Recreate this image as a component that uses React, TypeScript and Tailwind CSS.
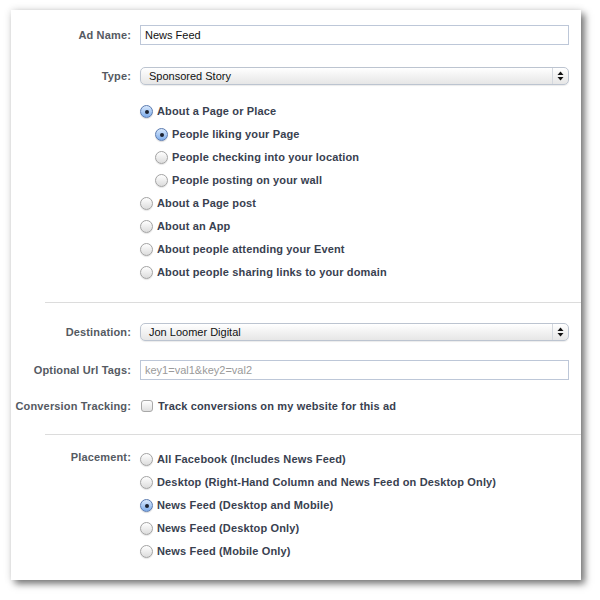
import React from "react";

const font = { fontFamily: '"Liberation Sans", Arial, sans-serif' };

function Radio({ checked }: { checked?: boolean }) {
  if (checked) {
    return (
      <span className="relative flex h-[13px] w-[13px] shrink-0 items-center justify-center rounded-full border border-[#5b7bb0] bg-gradient-to-b from-[#d8e8fc] to-[#7fadea] shadow-[0_1px_1px_rgba(0,0,0,0.15)]">
        <span className="h-[4px] w-[4px] rounded-full bg-[#1c2230]" />
      </span>
    );
  }
  return (
    <span className="h-[13px] w-[13px] shrink-0 rounded-full border border-[#a3a3a3] bg-gradient-to-b from-[#ffffff] to-[#dcdcdc] shadow-[0_1px_1px_rgba(0,0,0,0.1)]" />
  );
}

function RadioRow({ label, checked, indent }: { label: string; checked?: boolean; indent?: boolean }) {
  return (
    <div className={`flex h-[23px] items-center ${indent ? "pl-[15px]" : ""}`}>
      <Radio checked={checked} />
      <span className="ml-[4px] text-[11px] font-bold tracking-[0.15px] text-[#394150]">{label}</span>
    </div>
  );
}

function Arrows() {
  return (
    <span className="flex h-full w-[16px] items-center justify-center border-l border-[#d4d8de]">
      <svg width="7" height="10" viewBox="0 0 7 10">
        <path d="M3.5 0.5 L6.5 4 L0.5 4 Z" fill="#111" />
        <path d="M0.5 6 L6.5 6 L3.5 9.5 Z" fill="#111" />
      </svg>
    </span>
  );
}

function Select({ value }: { value: string }) {
  return (
    <div className="flex h-[18px] items-center rounded-[5px] border border-[#bcc4d0] bg-gradient-to-b from-[#ffffff] to-[#e6e6e6] pl-[8px] shadow-[0_1px_1px_rgba(0,0,0,0.08)]">
      <span className="flex-1 text-[11px] leading-none text-[#111]">{value}</span>
      <Arrows />
    </div>
  );
}

function Label({ children, className = "" }: { children: React.ReactNode; className?: string }) {
  return <div className={`text-right text-[11px] font-bold tracking-[0.15px] text-[#555a62] ${className}`}>{children}</div>;
}

export default function App() {
  return (
    <div className="min-h-[600px] w-[600px] bg-white pt-[10px] pl-[11px]" style={font}>
      <div className="h-[570px] w-[570px] bg-white pt-[15px] pr-[12px] shadow-[4px_4px_7px_rgba(0,0,0,0.5),0_0_8px_rgba(0,0,0,0.12)]">
        <div className="grid grid-cols-[120px_1fr] items-center gap-x-[9px]">
          <Label>Ad Name:</Label>
          <div className="flex h-[20px] items-center border border-[#bdc7d8] px-[4px] text-[11px] text-[#111]">News Feed</div>
        </div>

        <div className="mt-[22px] grid grid-cols-[120px_1fr] items-center gap-x-[9px]">
          <Label>Type:</Label>
          <Select value="Sponsored Story" />
        </div>

        <div className="mt-[15px] grid grid-cols-[120px_1fr] gap-x-[9px]">
          <div />
          <div className="flex flex-col">
            <RadioRow label="About a Page or Place" checked />
            <RadioRow label="People liking your Page" checked indent />
            <RadioRow label="People checking into your location" indent />
            <RadioRow label="People posting on your wall" indent />
            <RadioRow label="About a Page post" />
            <RadioRow label="About an App" />
            <RadioRow label="About people attending your Event" />
            <RadioRow label="About people sharing links to your domain" />
          </div>
        </div>

        <div className="-mr-[12px] mt-[18px] ml-[34px] h-px bg-[#dcdcdc]" />

        <div className="mt-[20px] grid grid-cols-[120px_1fr] items-center gap-x-[9px]">
          <Label>Destination:</Label>
          <Select value="Jon Loomer Digital" />
        </div>

        <div className="mt-[19px] grid grid-cols-[120px_1fr] items-center gap-x-[9px]">
          <Label>Optional Url Tags:</Label>
          <div className="flex h-[20px] items-center border border-[#bdc7d8] px-[4px] text-[11px] text-[#9a9a9a]">key1=val1&amp;key2=val2</div>
        </div>

        <div className="mt-[16px] grid h-[20px] grid-cols-[120px_1fr] items-center gap-x-[9px]">
          <Label>Conversion Tracking:</Label>
          <div className="flex items-center">
            <span className="ml-px h-[12px] w-[12px] rounded-[3px] border border-[#a8a8a8] bg-gradient-to-b from-[#ffffff] to-[#e0e0e0]" />
            <span className="ml-[5px] text-[11px] font-bold tracking-[0.15px] text-[#394150]">Track conversions on my website for this ad</span>
          </div>
        </div>

        <div className="-mr-[12px] mt-[18px] ml-[34px] h-px bg-[#dcdcdc]" />

        <div className="mt-[13px] grid grid-cols-[120px_1fr] gap-x-[9px]">
          <Label className="pt-[3px] leading-[13px]">Placement:</Label>
          <div className="flex flex-col">
            <RadioRow label="All Facebook (Includes News Feed)" />
            <RadioRow label="Desktop (Right-Hand Column and News Feed on Desktop Only)" />
            <RadioRow label="News Feed (Desktop and Mobile)" checked />
            <RadioRow label="News Feed (Desktop Only)" />
            <RadioRow label="News Feed (Mobile Only)" />
          </div>
        </div>
      </div>
    </div>
  );
}
